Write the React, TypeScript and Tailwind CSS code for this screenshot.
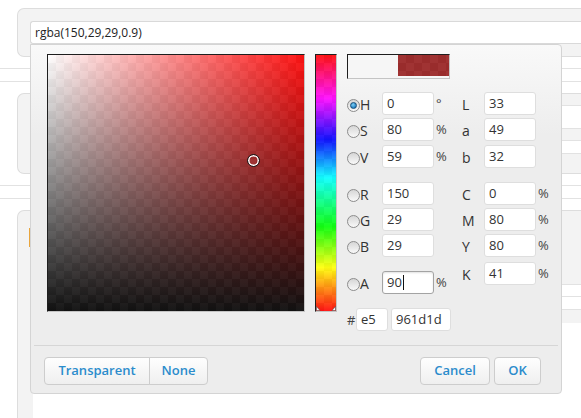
import React from "react";

function Radio({ checked }: { checked?: boolean }) {
  return (
    <div className="mt-[7px] w-[13px] h-[13px] shrink-0 rounded-full border border-[#8c8c8c] bg-[linear-gradient(#d6d6d6,#f9f9f9)] flex items-center justify-center">
      {checked && (
        <div className="w-[7px] h-[7px] rounded-full border border-[#174f7a] bg-[radial-gradient(circle_at_40%_35%,#7fd0f5,#1d7cc0_75%)]" />
      )}
    </div>
  );
}

function Field({
  value,
  className,
  focused,
}: {
  value: string;
  className: string;
  focused?: boolean;
}) {
  return (
    <div
      className={
        focused
          ? `${className} h-[23px] shrink-0 rounded-[3px] border border-[#a3a3a3] bg-white pl-[4px] text-[13px] leading-[21px] text-[#333] flex items-center shadow-[inset_0_1px_2px_rgba(0,0,0,0.12)]`
          : `${className} h-[23px] shrink-0 rounded-[3px] border border-[#dedede] bg-white pl-[4px] text-[13px] leading-[21px] text-[#333] flex items-center`
      }
    >
      <span>{value}</span>
      {focused && <span className="ml-[1px] w-px h-[15px] bg-[#111]" />}
    </div>
  );
}

function LRow({
  label,
  value,
  unit,
  checked,
  className,
  focused,
}: {
  label: string;
  value: string;
  unit?: string;
  checked?: boolean;
  className: string;
  focused?: boolean;
}) {
  return (
    <div className={`${className} flex items-start h-[23px]`}>
      <Radio checked={checked} />
      <span className="w-[22px] text-[14px] leading-[25px] text-[#333]">{label}</span>
      <Field value={value} className="w-[52px]" focused={focused} />
      <span className="w-[28px] pl-[2px] text-[13px] leading-[23px] text-[#444]">{unit}</span>
    </div>
  );
}

function RRow({
  label,
  value,
  unit,
  className,
}: {
  label: string;
  value: string;
  unit?: string;
  className: string;
}) {
  return (
    <div className={`${className} flex items-start h-[23px]`}>
      <span className="w-[22px] text-[14px] leading-[25px] text-[#333]">{label}</span>
      <Field value={value} className="w-[52px]" />
      <span className="pl-[2px] text-[13px] leading-[23px] text-[#444]">{unit}</span>
    </div>
  );
}

const checker =
  "bg-white bg-[repeating-conic-gradient(#b4b4b4_0%_25%,#ffffff_0%_50%)] bg-[length:16px_16px]";

export default function App() {
  return (
    <div className="relative w-[581px] h-[418px] overflow-hidden bg-white font-['Open_Sans','Noto_Sans',sans-serif]">
      {/* background page */}
      <div className="mt-[8px] ml-[17px] h-[49px] rounded-l-[7px] border border-r-0 border-[#dddddd] bg-[#f3f3f3] pl-[12px] pt-[12px]">
        <div className="h-[23px] rounded-l-[3px] border border-r-0 border-[#d9d9d9] bg-white pl-[4px] text-[12px] leading-[21px] text-[#222]">
          rgba(150,29,29,0.9)
        </div>
      </div>
      <div className="mt-[11px] h-[14px] border-y border-[#e2e2e2]" />
      <div className="mt-[11px] ml-[17px] h-[81px] rounded-l-[7px] border border-r-0 border-[#dddddd] bg-[#f3f3f3] pl-[12px] pt-[11px]">
        <div className="h-[24px] border-y border-[#e2e2e2] bg-white" />
        <div className="mt-[11px] h-[14px] border-y border-[#e2e2e2] bg-white" />
      </div>
      <div className="mt-[11px] h-[14px] border-y border-[#e2e2e2]" />
      <div className="mt-[11px] ml-[17px] h-[230px] rounded-tl-[7px] border-l border-t border-[#dddddd] bg-[#f3f3f3] pl-[11px] pt-[17px]">
        <div className="w-px h-[19px] bg-[#e9a53c]" />
        <div className="ml-[4px] mt-[37px] h-[13px] border-y border-[#e2e2e2] bg-white" />
        <div className="ml-[4px] h-[13px] border-b border-[#e2e2e2] bg-white" />
        <div className="ml-[4px] mt-[13px] h-[120px] bg-white" />
      </div>

      {/* color picker dialog */}
      <div className="absolute left-[30px] top-[44px] w-[532px] rounded-[4px] rounded-tl-none border border-[#d4d4d4] bg-[linear-gradient(#f9f9f9,#ededed_90px)] pt-[9px] pb-[8px]">
        <div className="flex pl-[16px]">
          {/* saturation / value */}
          <div className={`relative w-[258px] h-[258px] shrink-0 border border-[#c4c4c4] border-t-[#1e1e1e] border-l-[#1e1e1e] ${checker}`}>
            <div className="absolute inset-0 opacity-90">
              <div className="absolute inset-0 bg-[linear-gradient(to_right,#ffffff,#ff0000)]" />
              <div className="absolute inset-0 bg-[linear-gradient(to_bottom,rgba(0,0,0,0),#000000)]" />
            </div>
            <div className="absolute left-[199px] top-[99px] w-[13px] h-[13px] rounded-full border border-[#1a1a1a] shadow-[inset_0_0_0_1.5px_#ffffff]" />
          </div>
          {/* hue bar */}
          <div className={`relative ml-[10px] w-[22px] h-[258px] shrink-0 border border-[#c4c4c4] border-t-[#1e1e1e] border-l-[#1e1e1e] ${checker}`}>
            <div className="absolute inset-0 opacity-90 bg-[linear-gradient(to_bottom,#ff0000_0%,#ff00ff_17%,#0000ff_33%,#00ffff_48%,#00ff00_67%,#ffff00_83%,#ff0000_100%)]" />
            <svg className="absolute left-0 bottom-0" width="20" height="5" viewBox="0 0 20 5">
              <path d="M0.5 0.5 L4 4.5 L0.5 4.5 Z" fill="#fff" stroke="#555" strokeWidth="0.6" />
              <path d="M19.5 0.5 L16 4.5 L19.5 4.5 Z" fill="#fff" stroke="#555" strokeWidth="0.6" />
            </svg>
          </div>
          {/* controls */}
          <div className="ml-[10px] flex flex-col">
            <div className="w-[103px] h-[25px] flex border border-[#c4c4c4] border-t-[#1e1e1e] border-l-[#1e1e1e] bg-[#f6f6f6]">
              <div className="w-[50px] h-full" />
              <div className={`relative w-[51px] h-[21px] ${checker}`}>
                <div className="absolute inset-0 bg-[rgba(150,29,29,0.9)]" />
              </div>
            </div>
            <div className="mt-[13px] flex">
              <div className="w-[115px] flex flex-col">
                <LRow className="" label="H" value="0" unit="°" checked />
                <LRow className="mt-[3px]" label="S" value="80" unit="%" />
                <LRow className="mt-[4px]" label="V" value="59" unit="%" />
                <LRow className="mt-[14px]" label="R" value="150" />
                <LRow className="mt-[3px]" label="G" value="29" />
                <LRow className="mt-[3px]" label="B" value="29" />
                <LRow className="mt-[14px]" label="A" value="90" unit="%" focused />
                <div className="mt-[14px] flex items-start h-[23px]">
                  <span className="w-[9px] text-[13px] leading-[25px] text-[#444]">#</span>
                  <Field value="e5" className="w-[32px]" />
                  <Field value="961d1d" className="ml-[3px] w-[60px]" />
                </div>
              </div>
              <div className="flex flex-col">
                <RRow className="" label="L" value="33" />
                <RRow className="mt-[3px]" label="a" value="49" />
                <RRow className="mt-[4px]" label="b" value="32" />
                <RRow className="mt-[14px]" label="C" value="0" unit="%" />
                <RRow className="mt-[3px]" label="M" value="80" unit="%" />
                <RRow className="mt-[3px]" label="Y" value="80" unit="%" />
                <RRow className="mt-[5px]" label="K" value="41" unit="%" />
              </div>
            </div>
          </div>
        </div>
        <div className="mx-[3px] mt-[14px] border-t border-[#d6d6d6]" />
        <div className="mt-[11px] flex justify-between pl-[13px] pr-[20px]">
          <div className="flex">
            <button className="w-[106px] h-[28px] rounded-l-[4px] border border-[#cdcdcd] bg-[linear-gradient(#fefefe,#efefef)] text-[13px] font-semibold text-[#2b8ccc]">
              Transparent
            </button>
            <button className="-ml-px w-[59px] h-[28px] rounded-r-[4px] border border-[#cdcdcd] bg-[linear-gradient(#fefefe,#efefef)] text-[13px] font-semibold text-[#2b8ccc]">
              None
            </button>
          </div>
          <div className="flex">
            <button className="w-[70px] h-[28px] rounded-[4px] border border-[#cdcdcd] bg-[linear-gradient(#fefefe,#efefef)] text-[13px] font-semibold text-[#2b8ccc]">
              Cancel
            </button>
            <button className="ml-[4px] w-[47px] h-[28px] rounded-[4px] border border-[#cdcdcd] bg-[linear-gradient(#fefefe,#efefef)] text-[13px] font-semibold text-[#2b8ccc]">
              OK
            </button>
          </div>
        </div>
      </div>
    </div>
  );
}
